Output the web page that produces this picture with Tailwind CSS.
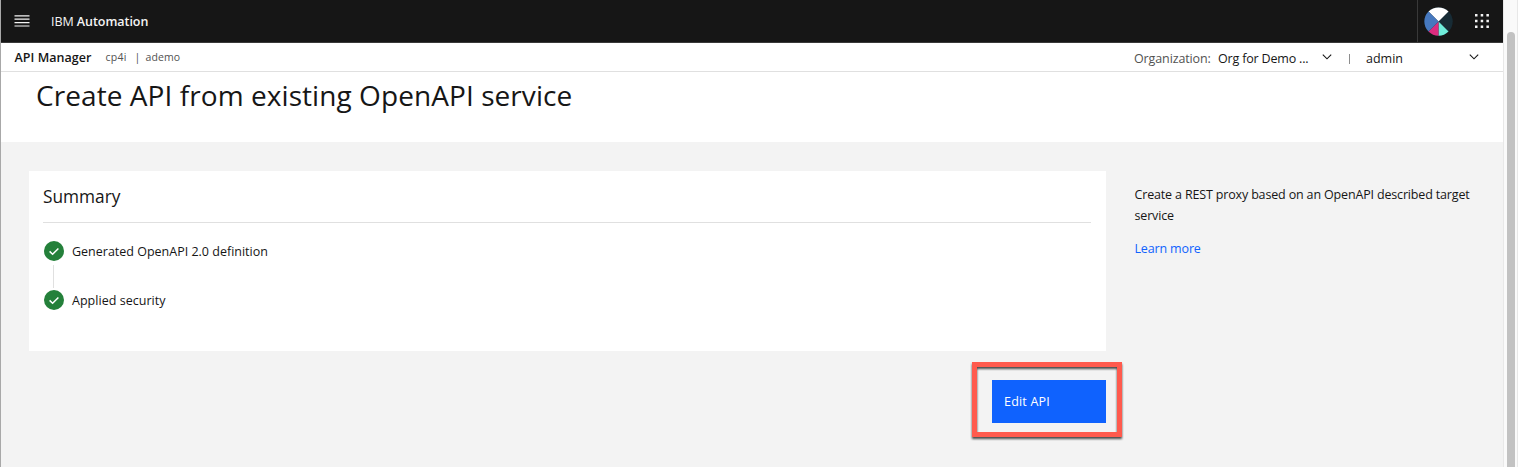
<!DOCTYPE html>
<html lang="en">
<head>
<meta charset="utf-8">
<title>API Manager</title>
<script src="https://cdn.jsdelivr.net/npm/@tailwindcss/browser@4"></script>
</head>
<body class="h-[467px] w-[1518px] overflow-hidden bg-[#f3f3f3] font-['Open_Sans',sans-serif] text-[12.5px] text-[#161616]">
<div class="flex h-full">
  <div class="flex h-full w-[1503px] shrink-0 flex-col border-l border-[#a8a8a8]">
    <header class="flex h-[43px] shrink-0 items-center border-b border-[#393939] bg-[#161616] text-[#f4f4f4]">
      <svg class="ml-[13px] h-3 w-[16px]" viewBox="0 0 16 12" stroke="#f4f4f4" stroke-width="1.2"><path d="M.5 .8h15M.5 4.2h15M.5 7.6h15M.5 11h15"/></svg>
      <div class="ml-[21px] pt-[2px] tracking-[-0.05px] whitespace-nowrap">IBM <b class="font-semibold">Automation</b></div>
      <div class="ml-auto h-full w-px bg-[#393939]"></div>
      <svg class="ml-[6px] size-[29px]" viewBox="-14.5 -14.5 29 29"><circle r="14.2" fill="#172b35"/><path d="M0 0L-10-10A14.2 14.2 0 0 1 10-10Z" fill="#fff"/><path d="M0 0L10 10A14.2 14.2 0 0 1 0 14.2Z" fill="#70eddb"/><path d="M0 0L-10 10A14.2 14.2 0 0 0 0 14.2Z" fill="#dc2c7f"/><path d="M0 0L-10 10A14.2 14.2 0 0 1-10-10Z" fill="#4678be"/></svg>
      <svg class="mr-[14px] ml-[22px] size-[14px]" viewBox="0 0 14 14" fill="#f4f4f4"><path d="M0 0h2.5v2.5H0zM5.7 0h2.5v2.5H5.7zM11.4 0h2.5v2.5h-2.5zM0 5.7h2.5v2.5H0zM5.7 5.7h2.5v2.5H5.7zM11.4 5.7h2.5v2.5h-2.5zM0 11.4h2.5v2.5H0zM5.7 11.4h2.5v2.5H5.7zM11.4 11.4h2.5v2.5h-2.5z"/></svg>
    </header>
    <nav class="flex h-[29px] shrink-0 items-center border-b border-[#e0e0e0] bg-white whitespace-nowrap">
      <b class="ml-[13.5px] w-[91px] pt-[2px] font-semibold tracking-[0.05px]">API Manager</b>
      <span class="w-[29px] pt-[1px] text-[10.5px] tracking-[0.3px] text-[#525252]">cp4i</span>
      <span class="w-[11px] pt-[1px] text-[10.5px] text-[#525252]">|</span>
      <span class="pt-[1px] text-[10.5px] tracking-[0.1px] text-[#525252]">ademo</span>
      <div class="ml-auto flex w-[369px] items-center">
        <span class="w-[84px] pt-[4px] tracking-[-0.12px] text-[#525252]">Organization:</span>
        <span class="w-[104px] pt-[4px] tracking-[-0.18px]">Org for Demo ...</span>
        <svg class="h-[6px] w-[10px] shrink-0" viewBox="0 0 10 6" fill="none" stroke="#161616" stroke-width="1.1"><path d="M.8 .6L5 4.8 9.2 .6"/></svg>
        <span class="ml-[17px] h-[10px] w-px translate-y-[2px] bg-[#8d8d8d]"></span>
        <span class="ml-[16px] w-[103px] pt-[4px]">admin</span>
        <svg class="h-[6px] w-[10px] shrink-0" viewBox="0 0 10 6" fill="none" stroke="#161616" stroke-width="1.1"><path d="M.8 .6L5 4.8 9.2 .6"/></svg>
      </div>
    </nav>
    <div class="h-[70px] shrink-0 bg-white pl-[35px]"><h1 class="text-[28px] leading-[47px] tracking-[0.07px]">Create API from existing OpenAPI service</h1></div>
    <main class="flex pt-[29px] pl-[28px]">
      <div class="w-[1077px] shrink-0">
        <section class="h-[180px] bg-white pr-[15px] pl-[14px]">
          <h2 class="h-[52px] border-b border-[#e0e0e0] text-[17.3px] leading-[51px]">Summary</h2>
          <div class="mt-[17px] flex h-[21px] items-center gap-2">
            <svg class="ml-[1px] size-5" viewBox="0 0 20 20"><circle cx="10" cy="10" r="10" fill="#24803a"/><path d="M5.6 10.4l3 2.9 5.8-5.8" fill="none" stroke="#fff" stroke-width="1.5"/></svg>
            <span class="pt-[3px]">Generated OpenAPI 2.0 definition</span>
          </div>
          <div class="mt-[4px] ml-[10px] h-[23px] w-px bg-[#e0e0e0]"></div>
          <div class="mt-[2px] flex h-[20px] items-center gap-2">
            <svg class="ml-[1px] size-5" viewBox="0 0 20 20"><circle cx="10" cy="10" r="10" fill="#24803a"/><path d="M5.6 10.4l3 2.9 5.8-5.8" fill="none" stroke="#fff" stroke-width="1.5"/></svg>
            <span class="pt-[2px] tracking-[0.03px]">Applied security</span>
          </div>
        </section>
        <div class="mt-[29px] flex justify-end">
          <div class="relative">
            <button class="block h-[43px] w-[114px] bg-[#0f62fe] pt-[2px] pl-3 text-left tracking-[0.2px] text-white">Edit API</button>
            <div class="absolute -top-[18px] -left-[20px] h-[75px] w-[150px] border-[5px] border-[#ff5a4d] drop-shadow-[0_2.5px_0.8px_rgba(0,0,0,0.7)]"></div>
          </div>
        </div>
      </div>
      <aside class="ml-[28.5px] w-[350px] pt-[13px] leading-[21px] whitespace-nowrap">
        <p class="tracking-[-0.16px]">Create a REST proxy based on an OpenAPI described target<br>service</p>
        <a class="mt-3 block tracking-[-0.15px] text-[#0f62fe]">Learn more</a>
      </aside>
    </main>
  </div>
  <div class="h-full w-[15px] shrink-0 border-x border-[#e8e8e8] bg-[#fafafa] pt-8 pl-[3px]">
    <div class="h-[450px] w-2 rounded-full bg-[#c2c2c2]"></div>
  </div>
</div>
</body>
</html>
